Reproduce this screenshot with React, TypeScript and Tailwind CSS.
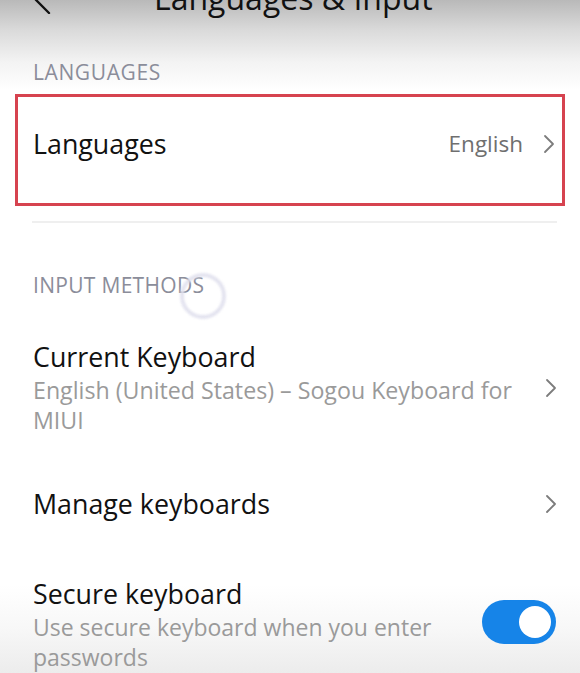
import React from "react";

function Chevron() {
  return (
    <svg width="12" height="20" viewBox="0 0 12 20" className="shrink-0">
      <path d="M2 2 L10 10 L2 18" fill="none" stroke="#7c7c7c" strokeWidth="1.8" strokeLinecap="round" strokeLinejoin="round" />
    </svg>
  );
}

export default function App() {
  return (
    <div className="relative w-[580px] h-[673px] overflow-hidden font-['Open_Sans',sans-serif] bg-[linear-gradient(to_bottom,#b9b9b9_0px,#dadada_30px,#f3f3f3_62px,#ffffff_90px,#ffffff_585px,#f7f7f7_630px,#ececec_673px)]">
      {/* top bar */}
      <div className="h-[50px] flex flex-col">
        <div className="flex items-center mt-[-20px] pl-[34px]">
          <svg width="20" height="30" viewBox="0 0 20 30" className="shrink-0 mt-[2px]">
            <path d="M15 3 L2 16 L15 29" fill="none" stroke="#111" strokeWidth="2.4" strokeLinecap="round" strokeLinejoin="round" />
          </svg>
          <div className="ml-[100px] text-[32px] leading-[36px] font-medium text-[#111] whitespace-nowrap">Languages &amp; Input</div>
        </div>
      </div>

      {/* LANGUAGES header */}
      <div className="h-[44px] pl-[33px] flex items-center text-[21px] leading-[24px] text-[#8b8d9a] tracking-[0.6px]">LANGUAGES</div>

      {/* highlighted Languages row */}
      <div className="mx-[15px] h-[112px] border-[3px] border-[#d6434f] bg-white pl-[15px] pr-[7px] pt-[31px]">
        <div className="flex items-center h-[32px]">
          <div className="flex-1 text-[26.8px] leading-[32px] text-[#111]">Languages</div>
          <div className="text-[22.5px] leading-[32px] text-[#6f6f6f] mr-[20px]">English</div>
          <Chevron />
        </div>
      </div>

      {/* divider */}
      <div className="mt-[15px] ml-[32px] mr-[23px] h-[2px] bg-[#efefef]" />

      {/* INPUT METHODS header */}
      <div className="mt-[50px] pl-[33px] text-[21px] leading-[24px] text-[#8b8d9a] tracking-[0.3px]">INPUT METHODS</div>

      {/* Current Keyboard */}
      <div className="mt-[44px] pl-[33px] pr-[23px] flex items-center">
        <div className="flex-1 pr-[14px]">
          <div className="text-[26.8px] leading-[32px] text-[#111]">Current Keyboard</div>
          <div className="mt-[2px] text-[23.2px] leading-[30px] text-[#9a9a9a]">English (United States) – Sogou Keyboard for MIUI</div>
        </div>
        <Chevron />
      </div>

      {/* Manage keyboards */}
      <div className="mt-[53px] pl-[33px] pr-[23px] flex items-center">
        <div className="flex-1 text-[26.8px] leading-[32px] text-[#111]">Manage keyboards</div>
        <Chevron />
      </div>

      {/* Secure keyboard */}
      <div className="mt-[58px] pl-[33px] pr-[24px] flex items-center">
        <div className="flex-1 pr-[30px]">
          <div className="text-[26.8px] leading-[32px] text-[#111]">Secure keyboard</div>
          <div className="mt-[2px] text-[23px] leading-[30px] text-[#9a9a9a] max-w-[420px]">Use secure keyboard when you enter passwords</div>
        </div>
        <div className="w-[74px] h-[44px] rounded-full bg-[#1684e8] flex items-center justify-end pr-[5px] mt-[-7px]">
          <div className="w-[32px] h-[32px] rounded-full bg-white" />
        </div>
      </div>

      {/* loading ring overlay */}
      <div className="absolute left-[180px] top-[273px] w-[46px] h-[46px] rounded-full border-[4px] border-[#e1e1ee] blur-[1px] opacity-90" />
    </div>
  );
}
